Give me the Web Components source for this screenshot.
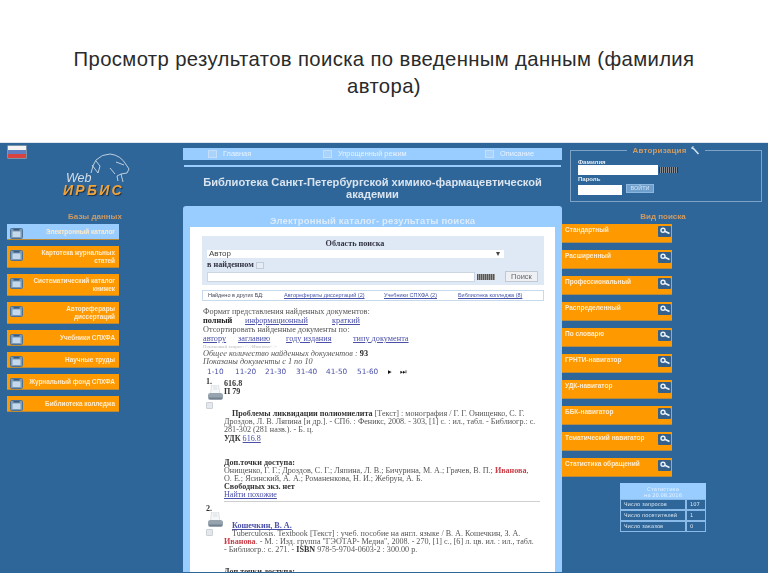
<!DOCTYPE html>
<html lang="ru"><head><meta charset="utf-8"><title>Просмотр результатов</title>
<style>html,body{margin:0;background:#fff}body{width:768px;height:576px;overflow:hidden;font-family:"Liberation Sans",sans-serif}</style>
</head><body>
<slide-title>Просмотр результатов поиска по введенным данным (фамилия автора)</slide-title>
<irbis-page></irbis-page>
<script>
const def=(name,html,setup)=>customElements.define(name,class extends HTMLElement{
  connectedCallback(){ if(this.shadowRoot)return; const r=this.attachShadow({mode:'open'}); r.innerHTML=typeof html==='function'?html(this):html; if(setup)setup(r,this);} });
const printer=`<svg width="17" height="16" viewBox="0 0 17 16"><path d="M4.500 0h7l1.500 9H3.500z" fill="#f6f7f8" stroke="#c3c8ce" stroke-width=".5"/><path d="M6 2h4M6 4h4.500" stroke="#c9ced4" stroke-width=".6"/><path d="M1 10Q1 8 3.500 8h10Q16 8 16 10.500V13q0 2-2.500 2h-10Q1 15 1 13z" fill="#97a4b0"/><path d="M2 12.500h13V14H2z" fill="#74818f"/></svg>`;
const cb=`<span style="display:block;width:5px;height:5px;border:1px solid #ccd1d7;background:#e4e7eb;border-radius:1px"></span>`;

def('slide-title',`<style>:host{display:block;height:142px;box-sizing:border-box;padding:46px 50px 0;text-align:center;font:20.300px/27px "Liberation Sans",sans-serif;letter-spacing:.37px;color:#2a2a2a}</style><slot></slot>`);

def('db-button',el=>`<style>:host{display:flex;align-items:center;box-sizing:border-box;width:112px;height:${el.getAttribute('h')||22}px;margin:0 0 6px 7px;background:${el.hasAttribute('active')?'#99ccff':'#ff9900'};border-bottom:1px solid #b98a3a;color:#ffeccc;font:bold 6.400px/7.500px "Liberation Sans",sans-serif;text-align:right;padding:0 4px 0 3px}
div{flex:1;white-space:nowrap}svg{flex:none;margin-top:${el.hasAttribute('h')?'3px':'-3px'}}</style><svg width="13" height="11" viewBox="0 0 13 11"><rect x=".5" y=".5" width="12" height="10" rx="1" fill="#7d9bb7" stroke="#4f7394"/><rect x="2.500" y="3.500" width="8" height="5.500" fill="#c4d9ec"/><path d="M3.500 1h6v1.500h-6z" fill="#39587a"/></svg><div><slot></slot></div>`);

def('kind-button',`<style>:host{display:block;position:relative;box-sizing:border-box;width:110px;height:19px;margin-bottom:7px;background:#ff9900;border-bottom:1px solid #b98a3a;color:#ffeccc;font:bold 6.500px/8px "Liberation Sans",sans-serif;padding:2px 3px}
svg{position:absolute;right:1px;top:2px}</style><slot></slot><svg width="13" height="11" viewBox="0 0 13 11"><rect width="13" height="11" rx="1" fill="#35608a"/><circle cx="5" cy="4.300" r="2" fill="none" stroke="#e8f2fb" stroke-width="1.400"/><path d="M6.800 5.200 11.500 7.500" stroke="#e8f2fb" stroke-width="1.700"/></svg>`);

def('left-col',`<style>:host{display:block;width:183px;padding-top:2px;box-sizing:border-box}
.flag{width:20px;height:14px;margin-left:7px;border:1px solid #7c93aa;box-sizing:border-box;background:linear-gradient(#f4f4f4 0 33%,#5f7fc0 33% 66%,#d8433f 66%);border-radius:1px}
.logo{position:relative;height:47px;margin-top:-8px}
.logo svg{position:absolute;left:88px;top:1px}
.web{position:absolute;left:66px;top:22px;font:italic 12.500px/10px "Liberation Sans",sans-serif;color:#d5dfe9}
.irb{position:absolute;left:63px;top:34px;font:italic bold 14px/10px "Liberation Sans",sans-serif;letter-spacing:2.300px;color:#f0a23c;text-shadow:1px 1px 1px #1d3146}
h4{margin:15px 0 3px;font:bold 8px/8px "Liberation Sans",sans-serif;color:#cf9b63;text-align:center;padding-left:7px}</style>
<div class="flag"></div>
<div class="logo"><svg width="46" height="38" viewBox="0 0 46 38" fill="none" stroke="#dfe8f0" stroke-width=".8"><path d="M3 21Q5 12 8 8 14 2 22 2 33 3 39 14L41 17 39 21 33 22 29 24 30 29"/><path d="M4 13 10 21 12 14 8 9"/><path d="M28 10 36 13M33 22 35 30M22 16 27 22"/></svg><span class="web">Web</span><span class="irb">ИРБИС</span></div>
<h4>Базы данных</h4>
<db-button active h="16">Электронный каталог</db-button>
<db-button>Картотека журнальных<br>статей</db-button>
<db-button>Систематический каталог<br>книжек</db-button>
<db-button>Автореферары<br>диссертаций</db-button>
<db-button h="16">Учебники СПХФА</db-button>
<db-button h="16">Научные труды</db-button>
<db-button h="16">Журнальный фонд СПХФА</db-button>
<db-button h="16">Библиотека колледжа</db-button>`);

def('nav-bar',`<style>:host{display:flex;height:12px;padding-left:25px;background:#99ccff;color:#eaf4ff;font:7.400px/12px "Liberation Sans",sans-serif}
span{display:flex;align-items:center;gap:6px;box-sizing:border-box}
i{display:block;width:9px;height:8px;border:1px solid #c4dff7;box-sizing:border-box;background:#a9d3fa}
.a{width:115px}.b{width:162px}</style>
<span class="a"><i></i>Главная</span><span class="b"><i></i>Упрощенный режим</span><span><i></i>Описание</span>`);

def('search-box',`<style>:host{display:block;margin:9px 11px 0 12px;height:49px;background:#dfe9f5;font:bold 8.200px/8px "Liberation Serif",serif;color:#334;box-sizing:border-box;padding:4px 5px}
.t{text-align:center;margin-right:36px}
.s{display:flex;justify-content:space-between;align-items:center;width:297px;height:8px;margin-top:2px;background:#fff;font:normal 8px/8px "Liberation Sans",sans-serif;padding:0 4px 0 2px;box-sizing:border-box;color:#444}
.k{margin-top:3px;display:flex;gap:2px;align-items:center;height:8px}
.r{display:flex;align-items:center;margin-top:2px}
.i{width:268px;height:10px;background:#fff;border:1px solid #ccd6e2;box-sizing:border-box}
.c{width:18px;height:6px;margin-left:2px;background:repeating-linear-gradient(90deg,#555 0 1px,#999 1px 2px)}
.b{width:33px;height:11px;margin-left:10px;background:#eef0f3;border:1px solid #c3c9d2;box-sizing:border-box;font:normal 7.500px/9px "Liberation Sans",sans-serif;text-align:center;color:#666}
i{display:block;width:6px;height:5px;background:#e6edf6;border:1px solid #c3cdd9}</style>
<div class="t">Область поиска</div>
<div class="s"><span>Автор</span><span>▾</span></div>
<div class="k">в найденном <i></i></div>
<div class="r"><div class="i"></div><div class="c"></div><div class="b">Поиск</div></div>`);

def('other-dbs',`<style>:host{display:flex;box-sizing:border-box;margin:5px 11px 0 12px;height:11px;border:1px solid #c7d9ec;font:5.500px/9px "Liberation Sans",sans-serif;color:#445;padding-left:5px;white-space:nowrap}
a{color:#4452a8;text-decoration:underline}
span,a{display:block}</style>
<span style="width:76px">Найдено в других БД:</span><a style="width:100px">Авторефераты диссертаций (2)</a><a style="width:74px">Учебники СПХФА (2)</a><a>Библиотека колледжа (8)</a>`);

def('result-meta',`<style>:host{display:block;margin:6px 0 0 13px;font:8.250px/9px "Liberation Serif",serif;color:#555;white-space:nowrap}
a{color:#4a4fa8;text-decoration:underline}b{color:#222}
.l{display:flex}.l>*{display:block}
.q{font-size:5px;line-height:7px;color:#bbb}
.it{font-style:italic;line-height:8px}
.p{font:7.300px/10px "DejaVu Sans",sans-serif;display:flex;margin:1px 0 0 4px;color:#333}
.p a{text-decoration:none;display:block}.p span{color:#111;display:block}</style>
<div>Формат представления найденных документов:</div>
<div class="l"><b style="width:42px">полный</b><a style="width:87px">информационный</a><a>краткий</a></div>
<div>Отсортировать найденные документы по:</div>
<div class="l"><a style="width:35px">автору</a><a style="width:48px">заглавию</a><a style="width:67px">году издания</a><a>типу документа</a></div>
<div class="q">Поисковый запрос: &lt;.&gt;Иванова&lt;.&gt;</div>
<div class="it">Общее количество найденных документов : <b style="font-style:normal">93</b></div>
<div class="it">Показаны документы с 1 по 10</div>
<div class="p"><a style="width:28px">1-10</a><a style="width:30px">11-20</a><a style="width:31px">21-30</a><a style="width:30px">31-40</a><a style="width:31px">41-50</a><a style="width:31px">51-60</a><span style="width:12px">▸</span><span>⏭</span></div>`);

def('result-item',el=>`<style>:host{display:grid;grid-template-columns:20px 316px;margin-left:14px;font:8.100px/8px "Liberation Serif",serif;color:#555;white-space:nowrap}
.n{font-weight:bold;color:#333}
.side{display:flex;flex-direction:column;align-items:flex-start;gap:1px;padding-left:2px}
.side svg{margin-top:-2px;margin-left:1px}</style>
<div class="side"><span class="n">${el.getAttribute('n')}</span>${printer}${cb}</div>
<div><slot></slot></div>`);

def('results-list',`<style>:host{display:block;margin-top:1px}</style><slot></slot>`);

def('mid-col',`<style>:host{display:block;width:379px;padding-top:5px;box-sizing:border-box}
.rule{height:2px;background:#99ccff;margin:5px 1px 0}
h1{margin:9px 0 6px;font:bold 11.100px/12px "Liberation Sans",sans-serif;color:#d9e4ef;text-align:center;height:24px}
.panel{background:#99ccff;border-radius:3px 3px 0 0;padding:0 7px;height:366px;overflow:hidden}
h2{margin:0;height:21px;font:bold 9.500px/30px "Liberation Sans",sans-serif;color:#dcecfb;text-align:center;letter-spacing:.2px}
.white{background:#fff;height:345px;overflow:hidden;padding-top:.1px}
a{color:#4a4fa8;text-decoration:underline}b{color:#333}
.red{color:#c9404a;font-weight:bold}
hr{border:0;height:1px;background:#cfcfcf;margin:2px 0 3px;width:316px}
.ind{padding-left:8px}</style>
<nav-bar></nav-bar><div class="rule"></div>
<h1>Библиотека Санкт-Петербургской химико-фармацевтической академии</h1>
<div class="panel"><h2>Электронный каталог- результаты поиска</h2><div class="white">
<search-box></search-box><other-dbs></other-dbs><result-meta></result-meta>
<results-list>
<result-item n="1."><div style="height:30px;padding-top:2px;font-weight:bold;color:#333">616.8<br>П 79</div>
<div><span class="ind"><b>Проблемы ликвидации полиомиелита</b> [Текст] : монография / Г. Г. Онищенко, С. Г.</span><br>Дроздов, Л. В. Ляпина [и др.]. - СПб. : Феникс, 2008. - 303, [1] с. : ил., табл. - Библиогр.: с.<br>281-302 (281 назв.). - Б. ц.</div>
<div style="margin-top:1px"><b>УДК</b> <a>616.8</a></div>
<div style="height:16px"></div>
<div><b>Доп.точки доступа:</b></div>
<div>Онищенко, Г. Г.; Дроздов, С. Г.; Ляпина, Л. В.; Бичурина, М. А.; Грачев, В. П.; <span class="red">Иванова</span>,<br>О. Е.; Ясинский, А. А.; Романенкова, Н. И.; Жебрун, А. Б.</div>
<div><b>Свободных экз. нет</b></div>
<div><a>Найти похожие</a></div><hr></result-item>
<result-item n="2."><div style="height:17px"></div>
<div class="ind"><a style="font-weight:bold">Кошечкин, В. А.</a></div>
<div><span class="ind">Tuberculosis. Textbook [Текст] : учеб. пособие на англ. языке / В. А. Кошечкин, З. А.</span><br><span class="red">Иванова</span>. - М. : Изд. группа "ГЭОТАР- Медиа", 2008. - 270, [1] с., [6] л. цв. ил. : ил., табл.<br>- Библиогр.: с. 271. - <b>ISBN</b> 978-5-9704-0603-2 : 300.00 р.</div>
<div style="height:14px"></div>
<div><b>Доп.точки доступа:</b></div></result-item>
</results-list>
</div></div>`);

def('auth-box',`<style>:host{display:block;margin:3px 6px 0 8px;font:bold 6px/6px "Liberation Sans",sans-serif;color:#e4edf6}
fieldset{margin:0;height:56px;box-sizing:border-box;border:1px solid #7fa3c6;padding:4px 7px 0}
legend{margin:auto;padding:0 5px;font:bold 8px/9px "Liberation Sans",sans-serif;color:#cf9b63;letter-spacing:.2px;display:flex;gap:4px;align-items:center}
.r{display:flex;align-items:center}
.f{width:80px;height:10px;background:#fff}.p{width:44px;height:10px;background:#fff}
.c{width:19px;height:6px;margin-left:1px;background:repeating-linear-gradient(90deg,#2a3440 0 1px,#8a8f96 1px 2px)}
.b{margin:-3px 0 0 4px;width:28px;height:9px;background:#6f9fcc;border:1px solid #8ab6df;box-sizing:border-box;font:normal 5.500px/7px "Liberation Sans",sans-serif;text-align:center;color:#cfe4f7}</style>
<fieldset><legend>Авторизация <svg width="9" height="9" viewBox="0 0 9 9"><path d="M1 1.500 3 3 7.500 8" stroke="#cfe0f0" stroke-width="1.600" fill="none"/><path d="M0 2.500Q.5 0 3 0L2 1.500 3 3z" fill="#cfe0f0"/></svg></legend>
<div>Фамилия</div><div class="r"><div class="f"></div><div class="c"></div></div>
<div style="margin-top:1px">Пароль</div><div class="r" style="margin-top:3px"><div class="p"></div><div class="b">ВОЙТИ</div></div></fieldset>`);

def('stats-table',`<style>:host{display:grid;grid-template-columns:66px 20px;width:86px;margin:-1px 0 0 58px;color:#dbe9f6;font:5.200px/9px "DejaVu Sans",sans-serif;box-sizing:border-box}
div{border:1px solid #8abbe8;height:11px;box-sizing:border-box;padding-left:3px}
.h{grid-column:1/3;height:16px;background:#99ccff;text-align:center;font:5.200px/6px "DejaVu Sans",sans-serif;padding:3px 0 0;color:#e8f3fd;border:0}</style>
<div class="h">Статистика<br>на 20.08.2016</div>
<div>Число запросов</div><div>107</div><div>Число посетителей</div><div>1</div><div>Число заказов</div><div>0</div>`);

def('right-col',`<style>:host{display:block;width:206px;box-sizing:border-box}
h4{margin:11px 0 3px;font:bold 8px/8px "Liberation Sans",sans-serif;color:#cf9b63;text-align:center;width:202px}</style>
<auth-box></auth-box><h4>Вид поиска</h4>
<kind-button>Стандартный</kind-button><kind-button>Расширенный</kind-button><kind-button>Профессиональный</kind-button><kind-button>Распределенный</kind-button><kind-button>По словарю</kind-button><kind-button>ГРНТИ-навигатор</kind-button><kind-button>УДК-навигатор</kind-button><kind-button>ББК-навигатор</kind-button><kind-button>Тематический навигатор</kind-button><kind-button>Статистика обращений</kind-button>
<stats-table></stats-table>`);

def('irbis-page',`<style>:host{display:grid;grid-template-columns:183px 379px 206px;height:431px;overflow:hidden;background:#2f6699;filter:blur(.7px);border-top:1px solid #dfe6ee;box-sizing:border-box}</style>
<left-col></left-col><mid-col></mid-col><right-col></right-col>`);
</script>
</body></html>
